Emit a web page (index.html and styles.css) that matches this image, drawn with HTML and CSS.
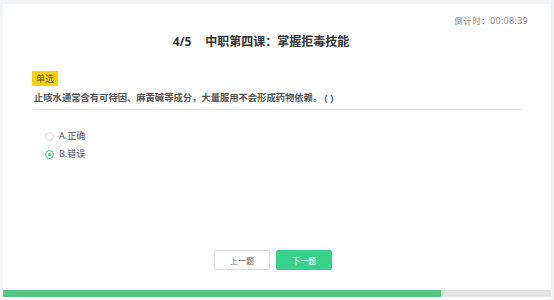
FILE: index.html
```html
<!DOCTYPE html>
<html lang="zh">
<head>
    <meta charset="UTF-8">
    <title>中职第四课：掌握拒毒技能</title>
    <link rel="stylesheet" href="styles.css">
</head>
<body>
    <div class="card">
        <div class="timer">倒计时：00:08:39</div>
        <h1 class="title"><span class="num">4/5</span>中职第四课：掌握拒毒技能</h1>

        <div class="question">
            <span class="tag">单选</span>
            <p class="stem">止咳水通常含有可待因、麻黄碱等成分，大量服用不会形成药物依赖。 ( )</p>
        </div>

        <ul class="options">
            <li class="option"><span class="radio"></span>A.正确</li>
            <li class="option checked"><span class="radio"></span>B.错误</li>
        </ul>

        <div class="actions">
            <button class="btn">上一题</button>
            <button class="btn primary">下一题</button>
        </div>

        <div class="progress">
            <div class="bar" style="width: 80%"></div>
        </div>
    </div>
</body>
</html>
```

FILE: styles.css
```css
body {
    margin: 0;
    padding: 4px 3px 0 3px;
    background: #f3f4f6;
    font-family: "Noto Sans", "Noto Sans CJK SC", sans-serif;
    color: #333;
}
.card {
    background: #fff;
    height: 296px;
    display: flex;
    flex-direction: column;
}
.timer {
    align-self: flex-end;
    margin: 10px 23px 0 0;
    font-size: 8.5px;
    line-height: 13px;
    letter-spacing: 0.5px;
    color: #888;
}
.title {
    margin: 6px 0 0 0;
    padding-right: 32px;
    text-align: center;
    font-size: 12px;
    line-height: 18px;
    font-weight: bold;
    color: #333;
}
.num {
    margin-right: 14px;
}
.question {
    margin: 14px 29px 0 29px;
    border-bottom: 1px solid #e3e3e3;
}
.tag {
    display: inline-block;
    background: #fad20a;
    color: #555;
    font-size: 9px;
    line-height: 15px;
    padding: 0 4px;
}
.stem {
    margin: 4px 0 0 2px;
    padding-bottom: 4px;
    font-size: 9.3px;
    line-height: 14px;
    font-weight: bold;
    color: #555;
}
.options {
    list-style: none;
    margin: 17px 0 0 42px;
    padding: 0;
}
.option {
    display: flex;
    align-items: center;
    font-size: 9px;
    line-height: 18px;
    color: #555;
}
.radio {
    width: 7px;
    height: 7px;
    border: 1px solid #ddd;
    border-radius: 50%;
    margin-right: 5px;
    position: relative;
}
.checked .radio {
    border-color: #34c77b;
}
.checked .radio::after {
    content: "";
    position: absolute;
    left: 2px;
    top: 2px;
    width: 3px;
    height: 3px;
    border-radius: 50%;
    background: #34c77b;
}
.actions {
    margin-top: auto;
    display: flex;
    justify-content: center;
    gap: 6px;
    padding: 0 8px 20px 0;
}
.btn {
    width: 56px;
    height: 20px;
    font-family: inherit;
    font-size: 8px;
    border: 1px solid #ddd;
    border-radius: 2px;
    background: #fff;
    color: #666;
    padding: 0;
}
.btn.primary {
    background: #38d18b;
    border-color: #38d18b;
    color: #fff;
}
.progress {
    height: 7px;
    background: #e3e3e3;
    margin-bottom: 3px;
}
.bar {
    height: 100%;
    background: #56c883;
}
```
